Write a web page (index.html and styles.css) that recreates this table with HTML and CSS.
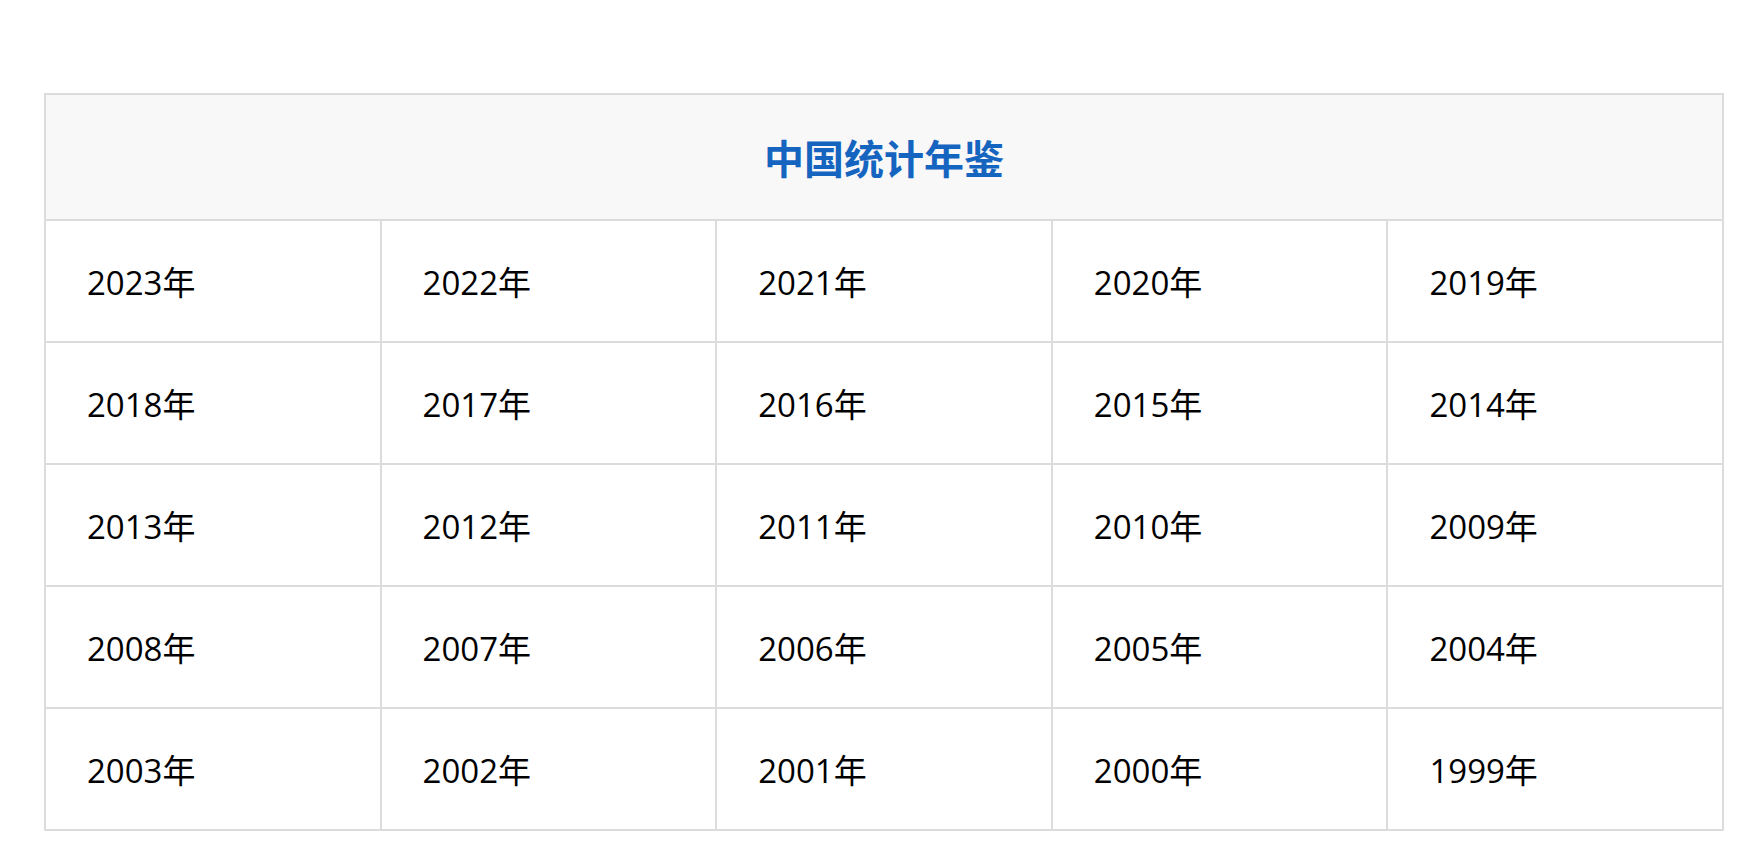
FILE: index.html
```html
<!DOCTYPE html>
<html lang="zh-CN">
<head>
<meta charset="utf-8">
<title>中国统计年鉴</title>
<link rel="stylesheet" href="styles.css">
</head>
<body>
<div class="page">
  <div class="yearbook">
    <div class="yearbook-title">中国统计年鉴</div>
    <div class="cell">2023年</div>
    <div class="cell">2022年</div>
    <div class="cell">2021年</div>
    <div class="cell">2020年</div>
    <div class="cell">2019年</div>
    <div class="cell">2018年</div>
    <div class="cell">2017年</div>
    <div class="cell">2016年</div>
    <div class="cell">2015年</div>
    <div class="cell">2014年</div>
    <div class="cell">2013年</div>
    <div class="cell">2012年</div>
    <div class="cell">2011年</div>
    <div class="cell">2010年</div>
    <div class="cell">2009年</div>
    <div class="cell">2008年</div>
    <div class="cell">2007年</div>
    <div class="cell">2006年</div>
    <div class="cell">2005年</div>
    <div class="cell">2004年</div>
    <div class="cell">2003年</div>
    <div class="cell">2002年</div>
    <div class="cell">2001年</div>
    <div class="cell">2000年</div>
    <div class="cell">1999年</div>
  </div>
</div>
</body>
</html>
```

FILE: styles.css
```css
html, body {
  margin: 0;
  padding: 0;
  background: #ffffff;
}

.page {
  padding: 93px 24px 0 44px;
  font-family: "Open Sans", "Noto Sans CJK SC", sans-serif;
}

.yearbook {
  width: 1680px;
  box-sizing: border-box;
  border: 1px solid #dcdcdc;
  display: grid;
  grid-template-columns: repeat(5, 1fr);
}

.yearbook-title {
  grid-column: 1 / -1;
  height: 124px;
  border: 1px solid #dcdcdc;
  background: #f8f8f8;
  display: flex;
  align-items: center;
  justify-content: center;
  font-family: "Noto Sans CJK SC", sans-serif;
  font-weight: 700;
  font-size: 40px;
  color: #1565c0;
}

.cell {
  height: 120px;
  border: 1px solid #dcdcdc;
  display: flex;
  align-items: center;
  padding-left: 41px;
  font-size: 33px;
  color: #000000;
}
```
